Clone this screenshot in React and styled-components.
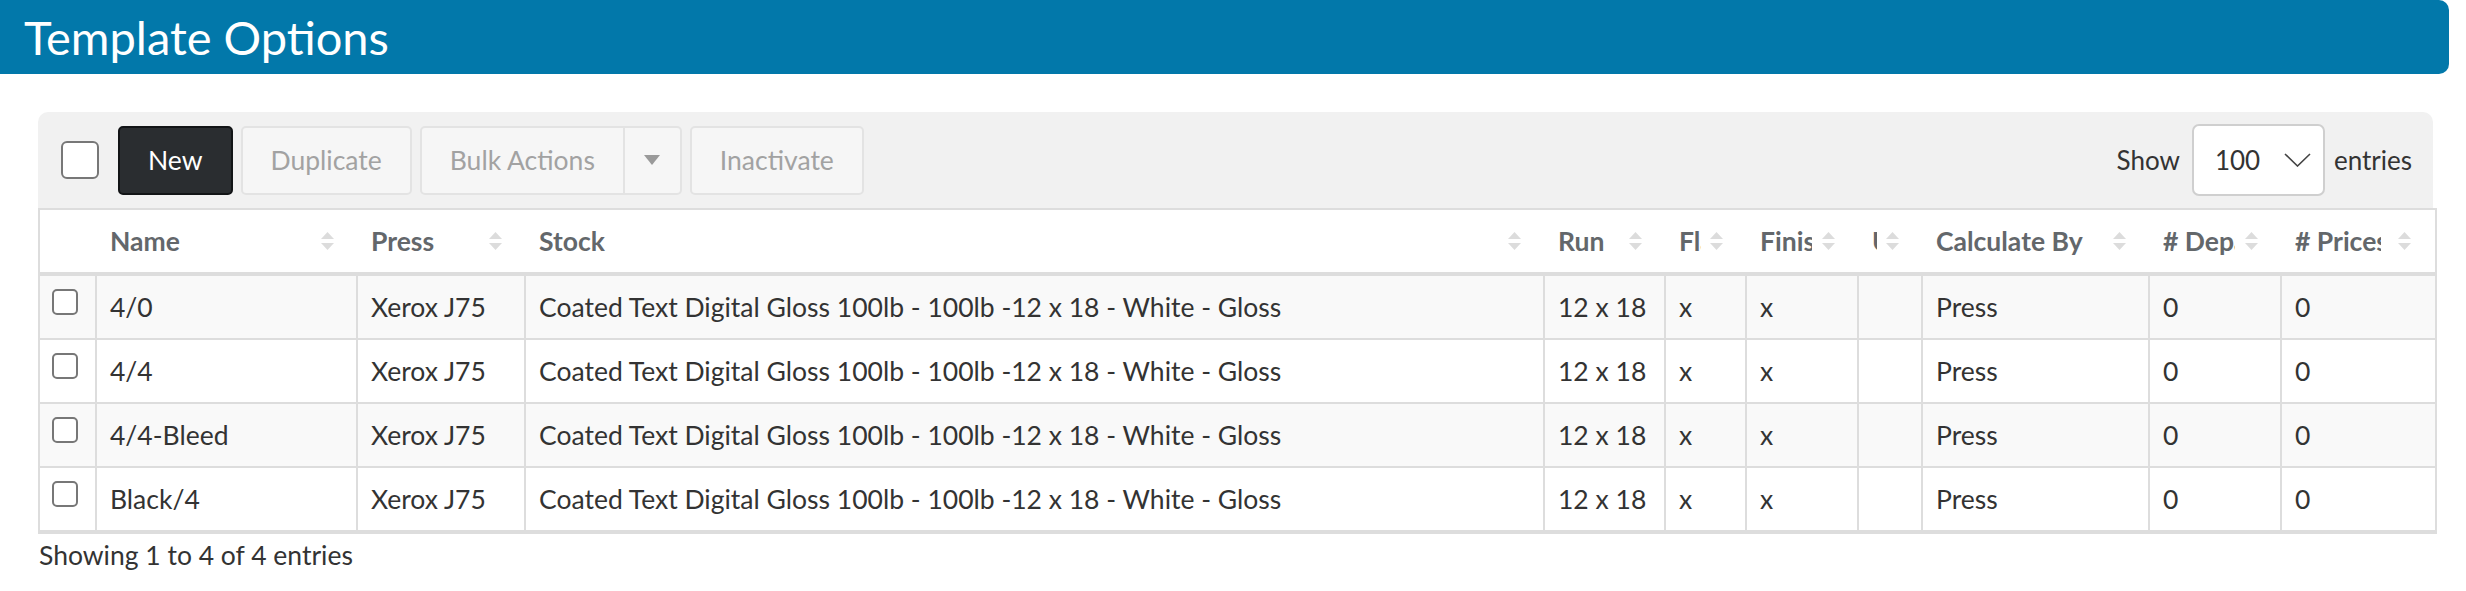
import React from 'react';
import styled, { createGlobalStyle } from 'styled-components';

const GlobalStyle = createGlobalStyle`
  html, body { margin: 0; padding: 0; background: #fff; }
  body { font-family: Lato, "Liberation Sans", sans-serif; color: #333; }
  *, *::before, *::after { box-sizing: border-box; }
`;

const Page = styled.div`
  width: 2466px;
`;

const TitleBar = styled.header`
  height: 74px;
  margin-right: 17px;
  padding-left: 24px;
  display: flex;
  align-items: center;
  background: #0278aa;
  border-radius: 0 10px 10px 0;
`;

const Title = styled.h1`
  margin: 0;
  font-size: 47px;
  font-weight: 400;
  line-height: 1;
  color: #fff;
`;

const Content = styled.main`
  padding: 38px 33px 0 38px;
`;

const Toolbar = styled.div`
  display: flex;
  align-items: center;
  justify-content: space-between;
  padding: 12px 21px 12px 23px;
  background: #f1f1f1;
  border-radius: 10px 10px 0 0;
`;

const Actions = styled.div`
  display: flex;
  align-items: center;
  gap: 8px;
`;

const Check = styled.input.attrs({ type: 'checkbox' })`
  appearance: none;
  margin: 0;
  display: block;
  width: ${p => (p.$big ? 38 : 26)}px;
  height: ${p => (p.$big ? 38 : 26)}px;
  border: 2px solid #777;
  border-radius: ${p => (p.$big ? 6 : 5)}px;
  background: #fff;
  margin-right: ${p => (p.$big ? 11 : 0)}px;
`;

const Button = styled.button`
  height: 69px;
  padding: 0 28px;
  font-family: inherit;
  font-size: 26.5px;
  font-weight: 400;
  border: 2px solid ${p => (p.$primary ? '#121416' : '#e3e3e3')};
  background: ${p => (p.$primary ? '#2a2d30' : '#f6f6f6')};
  color: ${p => (p.$primary ? '#fff' : '#a2a2a2')};
  border-radius: 5px;
`;

const SplitGroup = styled.div`
  display: flex;
`;

const SplitMain = styled(Button)`
  border-radius: 5px 0 0 5px;
`;

const SplitCaret = styled(Button)`
  width: 57px;
  padding: 0;
  border-left: none;
  border-radius: 0 5px 5px 0;
  display: flex;
  align-items: center;
  justify-content: center;
`;

const LengthControl = styled.label`
  display: flex;
  align-items: center;
  font-size: 26px;
  color: #333;
`;

const SelectBox = styled.div`
  width: 133px;
  height: 72px;
  margin: 0 9px 0 12px;
  padding: 0 12px 0 21px;
  display: flex;
  align-items: center;
  justify-content: space-between;
  background: #fff;
  border: 2px solid #cfcfcf;
  border-radius: 7px;
  color: #333;
`;

const Table = styled.table`
  width: 100%;
  table-layout: fixed;
  border-collapse: separate;
  border-spacing: 0;
  border: 2px solid #ddd;
  font-size: 26.5px;
`;

const Th = styled.th`
  position: relative;
  padding: 0 0 0 13px;
  text-align: left;
  font-weight: 700;
  color: #63676b;
  background: #fff;
  line-height: 62px;
  border-bottom: 4px solid #ddd;
`;

const HeadLabel = styled.span`
  display: block;
  overflow: hidden;
  white-space: nowrap;
  max-width: ${p => (p.$clip ? `${p.$clip}px` : 'calc(100% - 40px)')};
`;

const SortIcon = styled.svg`
  position: absolute;
  right: 24px;
  top: 50%;
  margin-top: -9px;
`;

const Row = styled.tr`
  background: ${p => (p.$odd ? '#f9f9f9' : '#fff')};
`;

const Td = styled.td`
  padding: ${p => (p.$sel ? '13px 0 0 12px' : '0 12px 0 13px')};
  vertical-align: ${p => (p.$sel ? 'top' : 'middle')};
  line-height: 62px;
  white-space: nowrap;
  overflow: hidden;
  color: #333;
  border-bottom: 2px solid #ddd;
  border-right: ${p => (p.$last ? 'none' : '2px solid #ddd')};
`;

const Footer = styled.div`
  padding-top: 4px;
  padding-left: 1px;
  font-size: 26.5px;
  line-height: 34px;
  color: #333;
`;

const columns = [
  { key: 'sel', width: 57 },
  { key: 'name', label: 'Name', width: 261 },
  { key: 'press', label: 'Press', width: 168 },
  { key: 'stock', label: 'Stock', width: 1019 },
  { key: 'run', label: 'Run', width: 121 },
  { key: 'flat', label: 'Flat Size', width: 81, clip: 22 },
  { key: 'finish', label: 'Finished Size', width: 112, clip: 52 },
  { key: 'ups', label: 'Ups', width: 64, clip: 5 },
  { key: 'calc', label: 'Calculate By', width: 227 },
  { key: 'depts', label: '# Departments', width: 132, clip: 72 },
  { key: 'prices', label: '# Prices', width: 153, clip: 86 },
];

const stock = 'Coated Text Digital Gloss 100lb - 100lb -12 x 18 - White - Gloss';
const rows = ['4/0', '4/4', '4/4-Bleed', 'Black/4'].map(name => ({
  name,
  press: 'Xerox J75',
  stock,
  run: '12 x 18',
  flat: 'x',
  finish: 'x',
  ups: '',
  calc: 'Press',
  depts: '0',
  prices: '0',
}));

const Sort = () => (
  <SortIcon width="13" height="18" viewBox="0 0 13 18" aria-hidden="true">
    <polygon points="6.5,0 13,7 0,7" fill="#dcdcdc" />
    <polygon points="0,11 13,11 6.5,18" fill="#dcdcdc" />
  </SortIcon>
);

export default function App() {
  return (
    <Page>
      <GlobalStyle />
      <TitleBar>
        <Title>Template Options</Title>
      </TitleBar>
      <Content>
        <Toolbar>
          <Actions>
            <Check $big aria-label="Select all" />
            <Button $primary>New</Button>
            <Button>Duplicate</Button>
            <SplitGroup>
              <SplitMain>Bulk Actions</SplitMain>
              <SplitCaret aria-label="More">
                <svg width="16" height="10" viewBox="0 0 16 10" aria-hidden="true">
                  <polygon points="0,0 16,0 8,10" fill="#9a9a9a" />
                </svg>
              </SplitCaret>
            </SplitGroup>
            <Button>Inactivate</Button>
          </Actions>
          <LengthControl>
            Show
            <SelectBox>
              <span>100</span>
              <svg width="27" height="14" viewBox="0 0 27 14" aria-hidden="true">
                <polyline points="1,1 13.5,13 26,1" fill="none" stroke="#444" strokeWidth="1.6" />
              </svg>
            </SelectBox>
            entries
          </LengthControl>
        </Toolbar>
        <Table>
          <colgroup>
            {columns.map(c => (
              <col key={c.key} style={{ width: c.width }} />
            ))}
          </colgroup>
          <thead>
            <tr>
              {columns.map(c =>
                c.key === 'sel' ? (
                  <Th key={c.key} />
                ) : (
                  <Th key={c.key}>
                    <HeadLabel $clip={c.clip}>{c.label}</HeadLabel>
                    <Sort />
                  </Th>
                )
              )}
            </tr>
          </thead>
          <tbody>
            {rows.map((r, i) => (
              <Row key={r.name} $odd={i % 2 === 0}>
                {columns.map((c, ci) =>
                  c.key === 'sel' ? (
                    <Td key={c.key} $sel>
                      <Check aria-label={`Select ${r.name}`} />
                    </Td>
                  ) : (
                    <Td key={c.key} $last={ci === columns.length - 1}>
                      {r[c.key]}
                    </Td>
                  )
                )}
              </Row>
            ))}
          </tbody>
        </Table>
        <Footer>Showing 1 to 4 of 4 entries</Footer>
      </Content>
    </Page>
  );
}
